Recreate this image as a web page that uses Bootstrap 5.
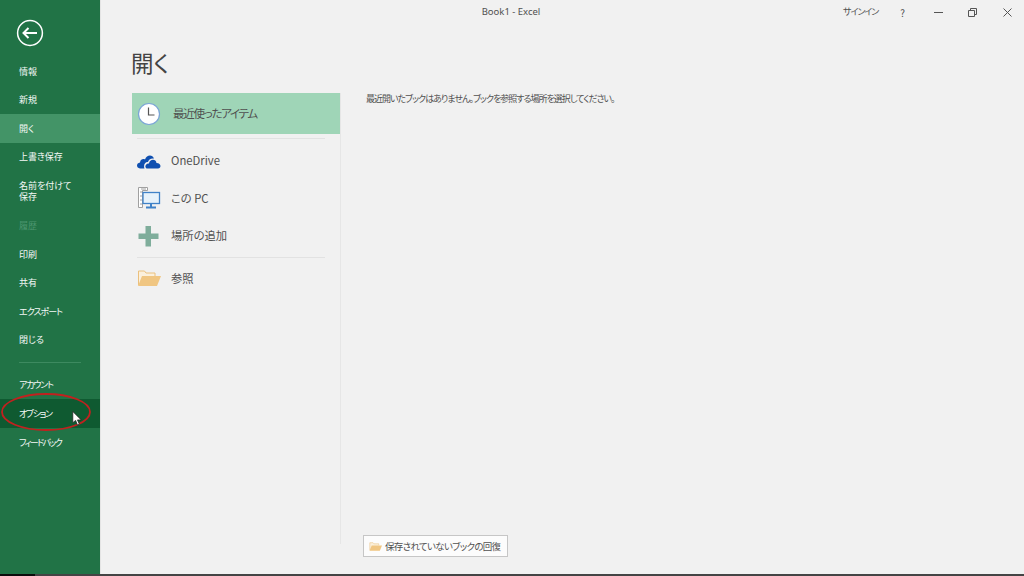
<!DOCTYPE html>
<html lang="ja">
<head>
<meta charset="utf-8">
<title>Book1 - Excel</title>
<link href="https://cdn.jsdelivr.net/npm/bootstrap@5.3.0/dist/css/bootstrap.min.css" rel="stylesheet">
<style>
html,body{height:100%;margin:0;overflow:hidden}
body{background:#f1f1f1;font-family:"Noto Sans CJK JP","Noto Sans",sans-serif;color:#505050;font-feature-settings:"palt"}
.xl-shell{width:1024px;height:576px;position:relative;border-bottom:2px solid #444;border-image:linear-gradient(to right,#0c0c0c 36px,#444 36px) 1}
.xl-side{width:101px;background:#217346;color:#fff;border-right:1px solid #e4e4e4;font-size:9px;padding-top:19px}
.xl-back{margin-left:16px;margin-bottom:10px;width:28px;height:28px;display:block}
.xl-item{height:28.6px;padding-left:19px;display:flex;align-items:center;color:#f4f8f6;line-height:11.5px;white-space:nowrap}
.xl-item.tall{height:40px}
.xl-item.on{background:#439467}
.xl-item.hov{background:#0f5a31}
.xl-item.off{color:#4d9670}
.xl-t10{letter-spacing:-1px}
.xl-t12{letter-spacing:-1.2px}
.xl-t14{letter-spacing:-1.4px}
.xl-t17{letter-spacing:-1.700px}
.xl-rule{height:1px;background:#3d8a60;margin:8px 19px 7.500px}
.xl-main{min-width:0}
.xl-appname{font-size:9.500px;text-align:center;padding:5px 0 0 78px;font-family:"Noto Sans",sans-serif;width:742px;height:24px}
.xl-h{font-size:22.500px;font-weight:400;margin:22px 0 0 30px;line-height:32px;color:#444}
.xl-controls{font-size:9px;width:181px;height:24px;letter-spacing:-1px}
.xl-signin{width:36px;white-space:nowrap}
.xl-ctl1{width:46px;text-align:center;font-size:10px}
.xl-ctl2{width:26px;text-align:center}
.xl-ctl3{width:42px;text-align:center}
.xl-ctl4{width:28px;text-align:center}
.xl-ctl2 svg,.xl-ctl3 svg,.xl-ctl4 svg{display:block;margin:auto}
.xl-places{width:209px;margin-left:31px;border-right:1px solid #e6e6e6;height:451px}
.xl-recent{height:41px;background:#9fd5b7;padding-left:4px;font-size:11.500px;gap:11px;letter-spacing:-1.300px}
.xl-place{height:37.500px;padding-left:5px;gap:10px;font-size:11.300px}
.xl-sep{height:1px;background:#e2e2e2;margin:0 15px 0 5px}
.xl-sep1{margin-top:4px;margin-bottom:3px}
.xl-sep2{margin-top:2px;margin-bottom:2px}
.xl-msg{font-size:9px;padding:0 0 0 25px;line-height:12px;margin:0;letter-spacing:-1px;white-space:nowrap}
.xl-body{margin-top:15px}
.xl-restore{position:absolute;left:363px;top:535px;width:145px;height:22px;background:#fcfcfc;border:1px solid #c6c6c6;font-size:9.500px;padding-left:5px;gap:3px;letter-spacing:-.7px;white-space:nowrap}
.xl-ring{position:absolute;left:1px;top:393px;width:90px;height:38px;pointer-events:none}
.xl-cursor{position:absolute;left:72px;top:411px;width:10px;height:15px}
</style>
</head>
<body>
<div class="xl-shell d-flex">
  <nav class="xl-side flex-shrink-0 d-flex flex-column">
    <svg class="xl-back" viewBox="0 0 28 28" fill="none" stroke="#fff"><circle cx="14" cy="14" r="12.400" stroke-width="1.500"/><path d="M7.500 14H21M12.500 9l-5 5 5 5" stroke-width="2"/></svg>
    <div class="xl-item">情報</div>
    <div class="xl-item">新規</div>
    <div class="xl-item on">開く</div>
    <div class="xl-item">上書き保存</div>
    <div class="xl-item tall">名前を付けて<br>保存</div>
    <div class="xl-item off">履歴</div>
    <div class="xl-item">印刷</div>
    <div class="xl-item">共有</div>
    <div class="xl-item xl-t10">エクスポート</div>
    <div class="xl-item">閉じる</div>
    <div class="xl-rule"></div>
    <div class="xl-item xl-t12">アカウント</div>
    <div class="xl-item hov xl-t14">オプション</div>
    <div class="xl-item xl-t17">フィードバック</div>
  </nav>
  <main class="flex-grow-1 d-flex flex-column xl-main">
    <div class="d-flex">
      <div class="xl-appname">Book1 - Excel</div>
      <div class="xl-controls d-flex align-items-center">
        <span class="xl-signin">サインイン</span><span class="xl-ctl1">?</span>
        <span class="xl-ctl2"><svg width="9" height="9" viewBox="0 0 9 9" stroke="#555" fill="none"><path d="M0 4.500h9"/></svg></span>
        <span class="xl-ctl3"><svg width="9" height="9" viewBox="0 0 9 9" stroke="#555" fill="none"><path d="M.5 2.500h6v6h-6zM2.500 2.500V.5h6v6h-2"/></svg></span>
        <span class="xl-ctl4"><svg width="9" height="9" viewBox="0 0 9 9" stroke="#555" fill="none"><path d="M.5.5l8 8M8.500.5l-8 8"/></svg></span>
      </div>
    </div>
    <h1 class="xl-h">開く</h1>
    <div class="d-flex xl-body">
      <div class="xl-places flex-shrink-0">
        <div class="xl-recent d-flex align-items-center">
          <svg width="26" height="26" viewBox="0 0 26 26"><circle cx="13" cy="13" r="10.500" fill="#fff" stroke="#7ba5d6" stroke-width="1.200"/><path d="M12.500 6.500V14h6" fill="none" stroke="#555" stroke-width="1.200"/></svg>
          <span>最近使ったアイテム</span>
        </div>
        <div class="xl-sep xl-sep1"></div>
        <div class="xl-place d-flex align-items-center">
          <svg width="24" height="16" viewBox="0 0 24 16"><path fill="#0f4fb0" d="M3 15.500C-1 15-1 10 3 9.500 3.500 6 6.500 5.500 8 6.500 9.500 1.500 15.500 1 17 5.500 13.500 5 11.500 7 11 9 8.500 8.500 6 11.500 7.500 15.500Z"/><path fill="#0f4fb0" d="M9.500 15.500C7 14 9 10 12 10.500 12.500 6 19 5.500 19.500 10 24.500 10 24.500 15.500 21 15.500Z"/></svg>
          <span>OneDrive</span>
        </div>
        <div class="xl-place d-flex align-items-center">
          <svg width="24" height="24" viewBox="0 0 24 24"><path fill="#fff" stroke="#a0a0a0" d="M1.500 1.500h9v3h-5v17h-4z"/><path stroke="#a0a0a0" d="M3 6h2M3 10h2M3 14h2M3 18h2M4 3h5"/><rect x="6" y="6.500" width="16.500" height="11" fill="#e6f2fb" stroke="#3f82c8" stroke-width="1.300"/><path stroke="#3f82c8" stroke-width="2" d="M14 18v3M9 21.500h10"/></svg>
          <span>この PC</span>
        </div>
        <div class="xl-place d-flex align-items-center">
          <svg width="24" height="22" viewBox="0 0 24 22"><path fill="#7fad9b" d="M8.500 1h5.500v7.500h7.500v5.500h-7.500v7.500H8.500v-7.500H1.500V8.500h7z"/></svg>
          <span>場所の追加</span>
        </div>
        <div class="xl-sep xl-sep2"></div>
        <div class="xl-place d-flex align-items-center">
          <svg width="24" height="18" viewBox="0 0 24 18"><path fill="#fbf0dc" stroke="#ebc07d" d="M1.500 16V2h6l1.500 2h9v3"/><path fill="#f0c682" d="M1 17l4-10h19l-4 10z"/></svg>
          <span>参照</span>
        </div>
      </div>
      <p class="xl-msg">最近開いたブックはありません。ブックを参照する場所を選択してください。</p>
    </div>
  </main>
  <div class="xl-restore d-flex align-items-center">
    <svg width="13" height="11" viewBox="0 0 24 18"><path fill="#fbf0dc" stroke="#ebc07d" d="M1.500 16V2h6l1.500 2h9v3"/><path fill="#f0c682" d="M1 17l4-10h19l-4 10z"/></svg>
    <span>保存されていないブックの回復</span>
  </div>
  <svg class="xl-ring" viewBox="0 0 90 38"><ellipse cx="45" cy="19" rx="44" ry="18" fill="none" stroke="#c1211f" stroke-width="1.800"/></svg>
  <svg class="xl-cursor" viewBox="0 0 10 16"><path fill="#fff" stroke="#222" stroke-width=".8" d="M.5.5v12l3-2.500 2 5 2-1-2-4.500h4z"/></svg>
</div>
</body>
</html>
